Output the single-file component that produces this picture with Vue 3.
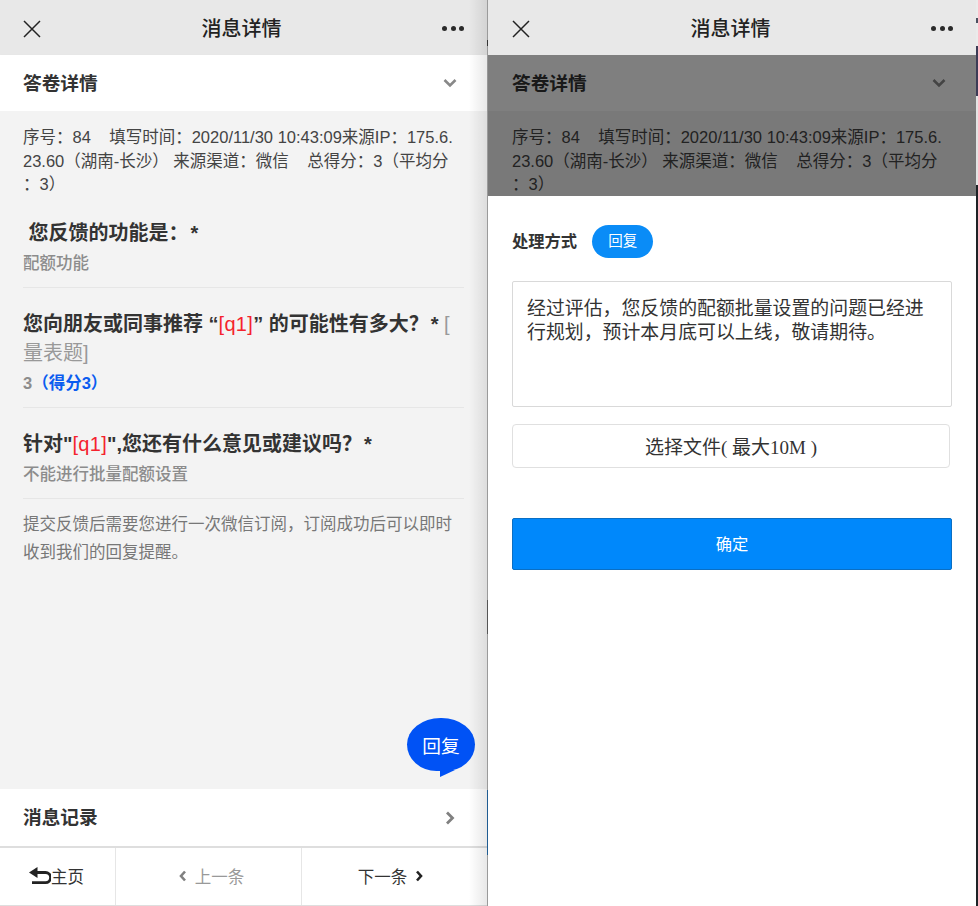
<script setup>
import { ref } from 'vue'

const reply = ref('经过评估，您反馈的配额批量设置的问题已经进行规划，预计本月底可以上线，敬请期待。')
const infoLines = [
  '序号：84\u00a0\u00a0\u00a0\u00a0填写时间：2020/11/30 10:43:09来源IP：175.6.',
  '23.60（湖南-长沙）\u00a0来源渠道：微信\u00a0\u00a0\u00a0\u00a0总得分：3（平均分',
  '：3）'
]
</script>

<template>
  <div class="page">
    <section class="phone phone-left">
      <header class="topbar">
        <svg class="icon-close" viewBox="0 0 18 18"><path d="M1 1l16 16M17 1L1 17" /></svg>
        <h1 class="title">消息详情</h1>
        <span class="dots"><i></i><i></i><i></i></span>
      </header>
      <div class="fold-row">
        <span class="row-label">答卷详情</span>
        <svg class="icon-chevron" viewBox="0 0 14 10"><path d="M1.5 2l5.5 5.5L12.5 2" /></svg>
      </div>
      <div class="sheet-body">
        <p v-for="line in infoLines" :key="line" class="info">{{ line }}</p>
        <div class="block">
          <h2 class="question">&nbsp;您反馈的功能是：<span class="star">*</span></h2>
          <p class="answer">配额功能</p>
        </div>
        <div class="block">
          <h2 class="question">您向朋友或同事推荐 “<em>[q1]</em>” 的可能性有多大？<span class="star">*</span> <span class="tag">[</span> <span class="tag">量表题]</span></h2>
          <p class="answer"><b>3</b><span class="score">（得分3）</span></p>
        </div>
        <div class="block">
          <h2 class="question">针对"<em>[q1]</em>",您还有什么意见或建议吗？<span class="star">*</span></h2>
          <p class="answer">不能进行批量配额设置</p>
        </div>
        <p class="note">提交反馈后需要您进行一次微信订阅，订阅成功后可以即时收到我们的回复提醒。</p>
        <button class="bubble">回复</button>
      </div>
      <div class="record-row">
        <span class="row-label">消息记录</span>
        <svg class="icon-next" viewBox="0 0 10 14"><path d="M2 1.5L7.5 7 2 12.5" /></svg>
      </div>
      <nav class="tabbar">
        <a class="tab tab-home">
          <svg class="icon-back" viewBox="0 0 22 18"><path class="fill" d="M0 5.5L8.5 0v11z" /><path class="line" d="M7 5.5h9.5a4.6 4.6 0 0 1 0 10.2H3" /></svg>主页
        </a>
        <a class="tab tab-off">
          <svg class="icon-step" viewBox="0 0 8 12"><path d="M6 1.5L2 6l4 4.5" /></svg>上一条
        </a>
        <a class="tab tab-next">
          下一条<svg class="icon-step" viewBox="0 0 8 12"><path d="M2 1.5L6 6l-4 4.5" /></svg>
        </a>
      </nav>
    </section>

    <div class="seam"></div>

    <section class="phone phone-right">
      <header class="topbar">
        <svg class="icon-close" viewBox="0 0 18 18"><path d="M1 1l16 16M17 1L1 17" /></svg>
        <h1 class="title">消息详情</h1>
        <span class="dots"><i></i><i></i><i></i></span>
      </header>
      <div class="dimmed">
        <div class="fold-row">
          <span class="row-label">答卷详情</span>
          <svg class="icon-chevron" viewBox="0 0 14 10"><path d="M1.5 2l5.5 5.5L12.5 2" /></svg>
        </div>
        <div class="sheet-body">
          <p v-for="line in infoLines" :key="line" class="info">{{ line }}</p>
        </div>
        <div class="mask"></div>
      </div>
      <div class="reply-form">
        <div class="method">
          <label>处理方式</label>
          <span class="pill">回复</span>
        </div>
        <textarea v-model="reply" class="reply-text"></textarea>
        <button class="file-btn">选择文件( 最大10M )</button>
        <button class="ok-btn">确定</button>
      </div>
    </section>

    <div class="edge"></div>
  </div>
</template>

<style scoped>
.page {
  display: flex;
  width: 978px;
  height: 906px;
  overflow: hidden;
  font-family: "Liberation Sans", "Noto Sans CJK SC", sans-serif;
  color: #333;
  background: #fff;
}

.phone {
  position: relative;
  display: flex;
  flex-direction: column;
  height: 906px;
}

.phone-left {
  width: 487px;
  background: #fff;
}

/* soft shadow down the right side of the left screen */
.phone-left::after {
  content: "";
  position: absolute;
  top: 0;
  right: 0;
  bottom: 0;
  width: 18px;
  background: linear-gradient(to right, rgba(0, 0, 0, 0), rgba(0, 0, 0, 0.09));
  pointer-events: none;
}

.phone-right {
  width: 488px;
  background: #fff;
}

.seam {
  width: 1px;
  background: linear-gradient(to bottom, #9a9a9a 0, #9a9a9a 40px, #333 40px, #333 46px, #9a9a9a 46px, #9a9a9a 600px, #555 600px, #555 634px, #9a9a9a 634px, #9a9a9a 790px, #1f5c92 790px, #1f5c92 855px, #9a9a9a 855px);
}

.edge {
  width: 2px;
  background: linear-gradient(to bottom, #ebebeb 0, #ebebeb 18px, #4a5060 18px, #4a5060 23px, #ebebeb 23px, #ebebeb 46px, #3c3b55 46px, #3c3b55 96px, #e4e4e4 96px, #e4e4e4 185px, #1e2226 185px);
}

.topbar {
  display: flex;
  align-items: center;
  justify-content: space-between;
  flex: none;
  height: 55px;
  padding: 2px 23px 0;
  background: #e8e8e8;
  box-sizing: border-box;
}

.phone-right .topbar {
  padding-left: 24px;
}

.title {
  margin: 0;
  padding-top: 1px;
  font-size: 20px;
  font-weight: 500;
  line-height: 30px;
  color: #222;
}

.icon-close {
  width: 18px;
  height: 18px;
  fill: none;
  stroke: #222;
  stroke-width: 1.5;
}

.dots {
  display: flex;
  gap: 3.5px;
}

.dots i {
  width: 5px;
  height: 5px;
  border-radius: 50%;
  background: #2a2a2a;
}

.fold-row,
.record-row {
  display: flex;
  align-items: center;
  justify-content: space-between;
  flex: none;
  padding: 0 30px 0 23px;
  background: #fff;
  font-size: 18.7px;
  font-weight: 700;
  color: #333;
}

.phone-right .fold-row {
  padding-left: 24px;
}

.row-label {
  padding-bottom: 4px;
}

.fold-row {
  height: 56px;
  box-shadow: 0 1px 2px rgba(0, 0, 0, 0.06);
}

.icon-chevron {
  width: 14px;
  height: 10px;
  fill: none;
  stroke: #888;
  stroke-width: 2.6;
}

.sheet-body {
  position: relative;
  flex: 1;
  padding: 15px 23px 0;
  background: #f3f3f3;
}

.phone-right .sheet-body {
  padding-left: 24px;
}

.info {
  margin: 0;
  font-size: 16.5px;
  line-height: 23.5px;
  white-space: nowrap;
  color: #444;
}

.block {
  padding: 22px 0 12px;
  border-bottom: 1px solid #e6e6e6;
}

.question {
  margin: 0;
  font-size: 20px;
  font-weight: 700;
  line-height: 29px;
  word-break: break-all;
  color: #333;
}

.question em {
  font-style: normal;
  font-weight: 400;
  letter-spacing: 0.3px;
  color: #f5222d;
}

.star {
  margin-left: 2px;
}

.tag {
  font-weight: 400;
  color: #999;
}

.answer {
  margin: 3px 0 0;
  font-size: 16.5px;
  font-weight: 500;
  line-height: 24px;
  color: #8c8c8c;
}

.answer b {
  font-weight: 700;
}

.score {
  font-weight: 700;
  color: #0a5cf0;
}

.note {
  margin: 11px 0 0;
  font-size: 16.5px;
  line-height: 28.5px;
  color: #777;
}

.bubble {
  position: absolute;
  top: 607px;
  right: 12px;
  width: 68px;
  height: 53px;
  padding: 0;
  border: 0;
  border-radius: 34px 34px 30px 30px / 27px;
  background: #0052f5;
  font: inherit;
  font-size: 18.7px;
  color: #fff;
}

.bubble::after {
  content: "";
  position: absolute;
  left: 33px;
  bottom: -6px;
  width: 0;
  height: 0;
  border-right: 15px solid transparent;
  border-top: 7px solid #0052f5;
}

.record-row {
  height: 57px;
}

.icon-next {
  width: 10px;
  height: 14px;
  fill: none;
  stroke: #808080;
  stroke-width: 2.8;
  margin-right: 2px;
}

.tabbar {
  display: grid;
  grid-template-columns: 115px 186px 1fr;
  flex: none;
  height: 60px;
  border-top: 2px solid #dedede;
  border-bottom: 1px solid #dedede;
  box-sizing: border-box;
  background: #fff;
}

.tab {
  display: flex;
  align-items: center;
  justify-content: center;
  gap: 8px;
  padding-bottom: 2px;
  border-left: 1px solid #e6e6e6;
  font-size: 16.5px;
  color: #333;
}

.tab-home {
  gap: 0;
  border-left: 0;
  padding-right: 2px;
}

.tab-off {
  padding-left: 6px;
  color: #999;
}

.tab-next {
  padding-right: 8px;
}

.icon-back {
  width: 22px;
  height: 18px;
}

.icon-back .fill {
  fill: #222;
}

.icon-back .line {
  fill: none;
  stroke: #222;
  stroke-width: 2.8;
}

.icon-step {
  width: 8px;
  height: 12px;
  fill: none;
  stroke-width: 2.6;
}

.tab-off .icon-step {
  stroke: #808080;
}

.tab-next .icon-step {
  stroke: #222;
}

.dimmed {
  position: relative;
  display: flex;
  flex-direction: column;
  flex: none;
  height: 141px;
  overflow: hidden;
}

.mask {
  position: absolute;
  inset: 0;
  background: rgba(0, 0, 0, 0.5);
}

.reply-form {
  display: flex;
  flex-direction: column;
  flex: 1;
  padding: 29px 24px 0;
  background: #fff;
}

.method {
  display: flex;
  align-items: center;
  gap: 15px;
  height: 33px;
}

.method label {
  padding-bottom: 3px;
  font-size: 16.3px;
  font-weight: 700;
  color: #333;
}

.pill {
  width: 61px;
  height: 33px;
  border-radius: 17px;
  background: #0a8cf7;
  font-size: 14.5px;
  line-height: 32px;
  text-align: center;
  color: #fff;
}

.reply-text {
  display: block;
  width: 440px;
  height: 126px;
  margin-top: 23px;
  padding: 15px 14px;
  border: 1px solid #d9d9d9;
  border-radius: 2px;
  box-sizing: border-box;
  outline: none;
  resize: none;
  font-family: inherit;
  font-size: 18.9px;
  line-height: 24px;
  color: #333;
}

.file-btn {
  width: 438px;
  height: 44px;
  margin-top: 17px;
  padding: 0 0 2px;
  border: 1px solid #e0e0e0;
  border-radius: 4px;
  background: #fff;
  font-family: "Liberation Serif", "Noto Sans CJK SC", serif;
  font-size: 19px;
  color: #333;
}

.ok-btn {
  width: 440px;
  height: 52px;
  margin-top: 50px;
  padding: 0 0 2px;
  border: 1px solid #0a6fc4;
  border-radius: 2px;
  background: #0088fb;
  font: inherit;
  font-size: 16.3px;
  color: #fff;
}
</style>
